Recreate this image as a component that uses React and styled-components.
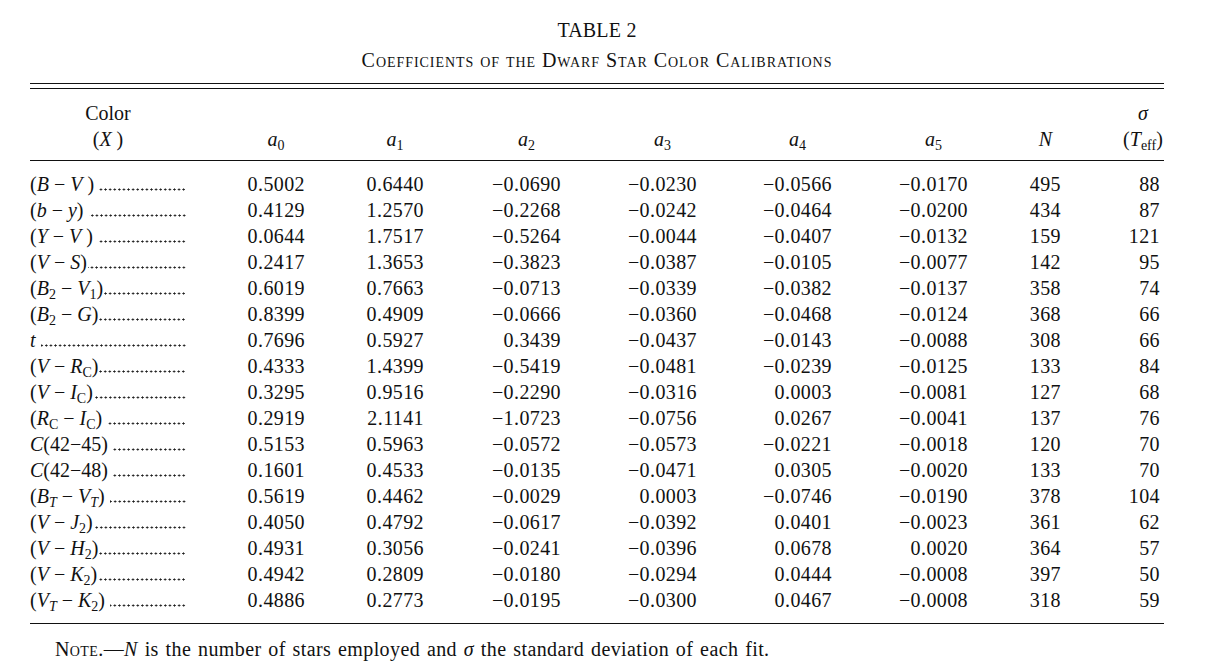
import React from "react";
import styled, { createGlobalStyle } from "styled-components";

const GlobalStyle = createGlobalStyle`
  html, body { margin: 0; padding: 0; background: #ffffff; }
  body {
    color: #111111;
    font-family: "Liberation Serif", "Times New Roman", serif;
  }
`;

const COLS = "156px 119px 119px 137px 136px 135px 136px 93px 103px";

const Page = styled.div`
  width: 1134px;
  padding: 17px 0 0 30px;
`;

const Title = styled.h1`
  margin: 0;
  font-size: 20px;
  font-weight: 400;
  line-height: 26px;
  text-align: center;
  letter-spacing: 0.2px;
`;

const Subtitle = styled.h2`
  margin: 4px 0 0;
  font-size: 20px;
  font-weight: 400;
  line-height: 26px;
  text-align: center;
  font-variant: small-caps;
  letter-spacing: 0.95px;
`;

const DoubleRule = styled.div`
  margin-top: 10px;
  height: 4px;
  border-top: 1px solid #111;
  border-bottom: 1px solid #111;
`;

const Head = styled.div`
  display: grid;
  grid-template-columns: ${COLS};
  padding: 11px 0 8px;
  border-bottom: 1px solid #111;
  font-size: 20px;
  line-height: 26px;
`;

const HeadCell = styled.div`
  display: flex;
  flex-direction: column;
  justify-content: flex-end;
  align-items: ${(p) => (p.$center ? "center" : "flex-end")};
`;

const HeadBox = styled.div`
  width: ${(p) => (p.$w ? `${p.$w}px` : "auto")};
  text-align: center;
  white-space: nowrap;
`;

const Body = styled.div`
  padding: 10px 0;
  border-bottom: 1px solid #111;
`;

const Row = styled.div`
  display: grid;
  grid-template-columns: ${COLS};
  font-size: 20px;
  line-height: 26px;
  height: 26px;
`;

const LabelCell = styled.div`
  display: flex;
  min-width: 0;
  white-space: nowrap;
`;

const Label = styled.span`
  flex: none;
  padding-right: ${(p) => (p.$gap ? 5 : 1)}px;
`;

const Leader = styled.span`
  flex: 1;
  min-width: 0;
  background-image: radial-gradient(circle, #1a1a1a 0.85px, rgba(0, 0, 0, 0) 1.25px);
  background-size: 4.6px 3px;
  background-position: right 0 top 17px;
  background-repeat: repeat-x;
`;

const Num = styled.div`
  text-align: right;
  white-space: nowrap;
  letter-spacing: 0.4px;
  padding-right: ${(p) => p.$pad || 0}px;
`;

const I = styled.i`
  font-style: italic;
`;

const Sub = styled.sub`
  font-size: 0.7em;
  line-height: 0;
  vertical-align: -0.28em;
  font-style: ${(p) => (p.$it ? "italic" : "normal")};
`;

const Note = styled.p`
  margin: 12px 0 0 25px;
  font-size: 20px;
  line-height: 26px;
  letter-spacing: 0.4px;
  word-spacing: 1.4px;
  white-space: nowrap;
`;

const SmallCaps = styled.span`
  font-variant: small-caps;
`;

const M = " \u2212 ";

const rows = [
  [true, <>(<I>B</I>{M}<I>V</I> )</>, "0.5002", "0.6440", "\u22120.0690", "\u22120.0230", "\u22120.0566", "\u22120.0170", "495", "88"],
  [true, <>(<I>b</I>{M}<I>y</I>)</>, "0.4129", "1.2570", "\u22120.2268", "\u22120.0242", "\u22120.0464", "\u22120.0200", "434", "87"],
  [true, <>(<I>Y</I>{M}<I>V</I> )</>, "0.0644", "1.7517", "\u22120.5264", "\u22120.0044", "\u22120.0407", "\u22120.0132", "159", "121"],
  [false, <>(<I>V</I>{M}<I>S</I>)</>, "0.2417", "1.3653", "\u22120.3823", "\u22120.0387", "\u22120.0105", "\u22120.0077", "142", "95"],
  [false, <>(<I>B</I><Sub>2</Sub>{M}<I>V</I><Sub>1</Sub>)</>, "0.6019", "0.7663", "\u22120.0713", "\u22120.0339", "\u22120.0382", "\u22120.0137", "358", "74"],
  [false, <>(<I>B</I><Sub>2</Sub>{M}<I>G</I>)</>, "0.8399", "0.4909", "\u22120.0666", "\u22120.0360", "\u22120.0468", "\u22120.0124", "368", "66"],
  [true, <><I>t</I></>, "0.7696", "0.5927", "0.3439", "\u22120.0437", "\u22120.0143", "\u22120.0088", "308", "66"],
  [false, <>(<I>V</I>{M}<I>R</I><Sub>C</Sub>)</>, "0.4333", "1.4399", "\u22120.5419", "\u22120.0481", "\u22120.0239", "\u22120.0125", "133", "84"],
  [false, <>(<I>V</I>{M}<I>I</I><Sub>C</Sub>)</>, "0.3295", "0.9516", "\u22120.2290", "\u22120.0316", "0.0003", "\u22120.0081", "127", "68"],
  [true, <>(<I>R</I><Sub>C</Sub>{M}<I>I</I><Sub>C</Sub>)</>, "0.2919", "2.1141", "\u22121.0723", "\u22120.0756", "0.0267", "\u22120.0041", "137", "76"],
  [true, <><I>C</I>(42{"\u2212"}45)</>, "0.5153", "0.5963", "\u22120.0572", "\u22120.0573", "\u22120.0221", "\u22120.0018", "120", "70"],
  [true, <><I>C</I>(42{"\u2212"}48)</>, "0.1601", "0.4533", "\u22120.0135", "\u22120.0471", "0.0305", "\u22120.0020", "133", "70"],
  [true, <>(<I>B</I><Sub $it>T</Sub>{M}<I>V</I><Sub $it>T</Sub>)</>, "0.5619", "0.4462", "\u22120.0029", "0.0003", "\u22120.0746", "\u22120.0190", "378", "104"],
  [false, <>(<I>V</I>{M}<I>J</I><Sub>2</Sub>)</>, "0.4050", "0.4792", "\u22120.0617", "\u22120.0392", "0.0401", "\u22120.0023", "361", "62"],
  [false, <>(<I>V</I>{M}<I>H</I><Sub>2</Sub>)</>, "0.4931", "0.3056", "\u22120.0241", "\u22120.0396", "0.0678", "0.0020", "364", "57"],
  [false, <>(<I>V</I>{M}<I>K</I><Sub>2</Sub>)</>, "0.4942", "0.2809", "\u22120.0180", "\u22120.0294", "0.0444", "\u22120.0008", "397", "50"],
  [true, <>(<I>V</I><Sub $it>T</Sub>{M}<I>K</I><Sub>2</Sub>)</>, "0.4886", "0.2773", "\u22120.0195", "\u22120.0300", "0.0467", "\u22120.0008", "318", "59"],
];

const coefHeads = [
  { k: "0", w: 58 },
  { k: "1", w: 58 },
  { k: "2", w: 69 },
  { k: "3", w: 69 },
  { k: "4", w: 69 },
  { k: "5", w: 69 },
];

export default function App() {
  return (
    <>
      <GlobalStyle />
      <Page>
        <Title>TABLE 2</Title>
        <Subtitle>Coefficients of the Dwarf Star Color Calibrations</Subtitle>
        <DoubleRule />
        <Head>
          <HeadCell $center>
            <HeadBox>Color</HeadBox>
            <HeadBox>
              (<I>X</I> )
            </HeadBox>
          </HeadCell>
          {coefHeads.map((h) => (
            <HeadCell key={h.k}>
              <HeadBox $w={h.w}>
                <I>a</I>
                <Sub>{h.k}</Sub>
              </HeadBox>
            </HeadCell>
          ))}
          <HeadCell>
            <HeadBox $w={31}>
              <I>N</I>
            </HeadBox>
          </HeadCell>
          <HeadCell>
            <HeadBox $w={42}>
              <I>σ</I>
            </HeadBox>
            <HeadBox $w={42}>
              (<I>T</I>
              <Sub>eff</Sub>)
            </HeadBox>
          </HeadCell>
        </Head>
        <Body>
          {rows.map((r, i) => (
            <Row key={i}>
              <LabelCell>
                <Label $gap={r[0]}>{r[1]}</Label>
                <Leader />
              </LabelCell>
              {r.slice(2, 9).map((v, j) => (
                <Num key={j}>{v}</Num>
              ))}
              <Num $pad={4}>{r[9]}</Num>
            </Row>
          ))}
        </Body>
        <Note>
          <SmallCaps>Note</SmallCaps>.—<I>N</I> is the number of stars employed and <I>σ</I> the
          standard deviation of each fit.
        </Note>
      </Page>
    </>
  );
}
